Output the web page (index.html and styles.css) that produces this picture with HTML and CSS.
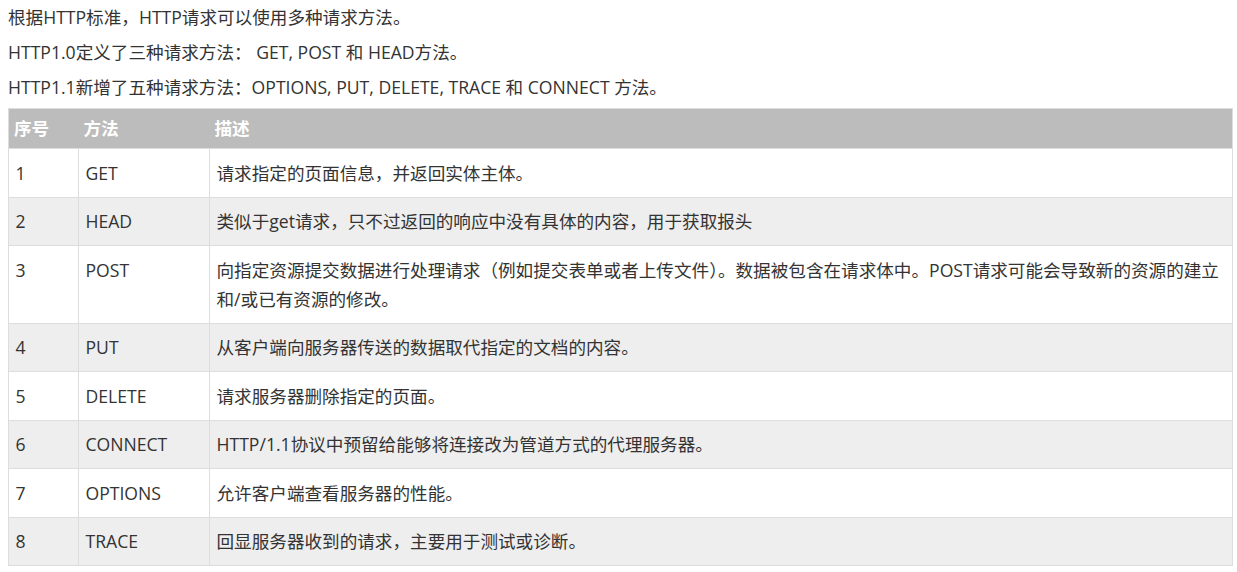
FILE: index.html
```html
<!DOCTYPE html>
<html lang="zh-CN">
<head>
<meta charset="utf-8">
<link rel="stylesheet" href="styles.css">
</head>
<body>
<div class="article">
  <p class="para">根据HTTP标准，HTTP请求可以使用多种请求方法。</p>
  <p class="para">HTTP1.0定义了三种请求方法： GET, POST 和 HEAD方法。</p>
  <p class="para">HTTP1.1新增了五种请求方法：OPTIONS, PUT, DELETE, TRACE 和 CONNECT 方法。</p>
  <table class="ref-table">
    <colgroup>
      <col class="col-no">
      <col class="col-method">
      <col class="col-desc">
    </colgroup>
    <thead>
      <tr><th>序号</th><th>方法</th><th>描述</th></tr>
    </thead>
    <tbody>
      <tr><td>1</td><td>GET</td><td>请求指定的页面信息，并返回实体主体。</td></tr>
      <tr><td>2</td><td>HEAD</td><td>类似于get请求，只不过返回的响应中没有具体的内容，用于获取报头</td></tr>
      <tr><td>3</td><td>POST</td><td>向指定资源提交数据进行处理请求（例如提交表单或者上传文件）。数据被包含在请求体中。POST请求可能会导致新的资源的建立和/或已有资源的修改。</td></tr>
      <tr><td>4</td><td>PUT</td><td>从客户端向服务器传送的数据取代指定的文档的内容。</td></tr>
      <tr><td>5</td><td>DELETE</td><td>请求服务器删除指定的页面。</td></tr>
      <tr><td>6</td><td>CONNECT</td><td>HTTP/1.1协议中预留给能够将连接改为管道方式的代理服务器。</td></tr>
      <tr><td>7</td><td>OPTIONS</td><td>允许客户端查看服务器的性能。</td></tr>
      <tr><td>8</td><td>TRACE</td><td>回显服务器收到的请求，主要用于测试或诊断。</td></tr>
    </tbody>
  </table>
</div>
</body>
</html>
```
FILE: styles.css
```css
html, body {
  margin: 0;
  padding: 0;
  background: #fff;
}
body {
  font-family: "Open Sans", "Noto Sans CJK SC", sans-serif;
  font-size: 17.6px;
  color: #333;
}
.article {
  padding: 3px 4px 0 8px;
}
.para {
  margin: 0 0 6px 0;
  line-height: 29px;
}
.ref-table {
  width: 1225px;
  table-layout: fixed;
  border-collapse: collapse;
  border: 1px solid #ddd;
  margin-top: 6px;
}
.col-no { width: 70px; }
.col-method { width: 131px; }
.ref-table th {
  background: #bcbcbc;
  color: #fff;
  font-weight: bold;
  text-align: left;
  padding: 5px 5px 5px 5px;
  line-height: 29px;
  border: none;
}
.ref-table td {
  padding: 9.5px 8px 9px 6.5px;
  line-height: 29px;
  border: 1px solid #ddd;
  vertical-align: top;
}
.ref-table tbody tr:nth-child(even) td {
  background: #eee;
}
```
